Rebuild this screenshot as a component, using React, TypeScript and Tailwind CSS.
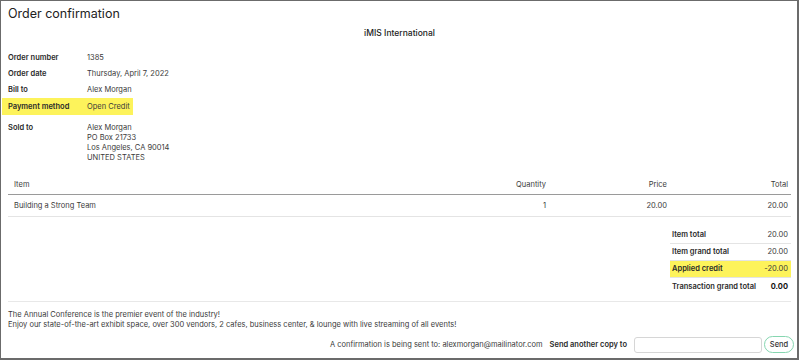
import { useState } from "react";

const font = { fontFamily: "Inter, 'Noto Sans', sans-serif" };

const details = [
  { label: "Order number", value: "1385" },
  { label: "Order date", value: "Thursday, April 7, 2022" },
  { label: "Bill to", value: "Alex Morgan" },
];

const totals = [
  { label: "Item total", value: "20.00" },
  { label: "Item grand total", value: "20.00" },
  { label: "Applied credit", value: "-20.00", highlight: true },
  { label: "Transaction grand total", value: "0.00", bold: true },
];

export default function App() {
  const [email, setEmail] = useState("");

  return (
    <div
      className="w-[799px] h-[360px] bg-white border-t border-l border-r-2 border-b-2 border-[#6b6b6b] pl-[7px] pr-[6px] text-[#3a3a3a] overflow-hidden"
      style={font}
    >
      <h1 className="mt-[2px] h-[22px] leading-[22px] text-[12.5px] text-[#222]">Order confirmation</h1>
      <div className="h-[16px] leading-[16px] text-center text-[8.5px] font-medium text-[#222]">iMIS International</div>

      {/* order details */}
      <div className="mt-[9px] text-[7.5px]">
        {details.map((d) => (
          <div key={d.label} className="flex h-[16px] items-center">
            <span className="w-[79px] font-semibold text-[#2a2a2a]">{d.label}</span>
            <span>{d.value}</span>
          </div>
        ))}
        <div className="flex h-[17px] items-center -ml-[6px] pl-[6px] w-[131px] bg-[#fdf35b]">
          <span className="w-[79px] font-semibold text-[#2a2a2a]">Payment method</span>
          <span>Open Credit</span>
        </div>
        <div className="flex mt-[8px] leading-[10px]">
          <span className="w-[79px] font-semibold text-[#2a2a2a]">Sold to</span>
          <div>
            <div>Alex Morgan</div>
            <div>PO Box 21733</div>
            <div>Los Angeles, CA 90014</div>
            <div>UNITED STATES</div>
          </div>
        </div>
      </div>

      {/* items table */}
      <div className="mt-[12px] text-[7.5px]">
        <div className="flex h-[20px] items-center border-b border-[#9a9a9a]">
          <span className="flex-1 pl-[6px]">Item</span>
          <span className="w-[121px] text-right pr-[3px]">Quantity</span>
          <span className="w-[121px] text-right pr-[3px]">Price</span>
          <span className="w-[121px] text-right pr-[3px]">Total</span>
        </div>
        <div className="flex h-[22px] items-center border-b border-[#e4e4e4]">
          <span className="flex-1 pl-[6px]">Building a Strong Team</span>
          <span className="w-[121px] text-right pr-[3px]">1</span>
          <span className="w-[121px] text-right pr-[3px]">20.00</span>
          <span className="w-[121px] text-right pr-[3px]">20.00</span>
        </div>
      </div>

      {/* totals */}
      <div className="mt-[10px] flex justify-end text-[7.5px]">
        <div className="w-[121px]">
          {totals.map((t, i) => (
            <div
              key={t.label}
              className={`flex h-[17px] items-center justify-between pl-[2px] pr-[3px] ${
                i < totals.length - 1 ? "border-b border-[#e4e4e4]" : ""
              } ${t.highlight ? "bg-[#fdf35b]" : ""}`}
            >
              <span className="font-semibold text-[#2a2a2a]">{t.label}</span>
              <span className={t.bold ? "font-bold text-[#111]" : ""}>{t.value}</span>
            </div>
          ))}
        </div>
      </div>

      <div className="mt-[6px] border-t border-[#e8e8e8]" />

      <div className="mt-[8px] text-[7.5px] leading-[10px]">
        <div>The Annual Conference is the premier event of the industry!</div>
        <div>
          Enjoy our state-of-the-art exhibit space, over 300 vendors, 2 cafes, business center, &amp; lounge with live
          streaming of all events!
        </div>
      </div>

      <div className="mt-[6px] -mr-[3px] flex h-[17px] items-center justify-end text-[7.5px]">
        <span>A confirmation is being sent to: alexmorgan@mailinator.com</span>
        <span className="ml-[7px] font-semibold text-[#2a2a2a]">Send another copy to</span>
        <input
          value={email}
          onChange={(e) => setEmail(e.target.value)}
          className="ml-[7px] w-[128px] h-[16px] rounded-[3px] border border-[#d6d6d6] bg-white px-[4px] outline-none"
        />
        <button className="ml-[2px] w-[30px] h-[17px] rounded-full border border-[#86d6b0] bg-white text-[7.5px] font-medium text-[#333]">
          Send
        </button>
      </div>
    </div>
  );
}
